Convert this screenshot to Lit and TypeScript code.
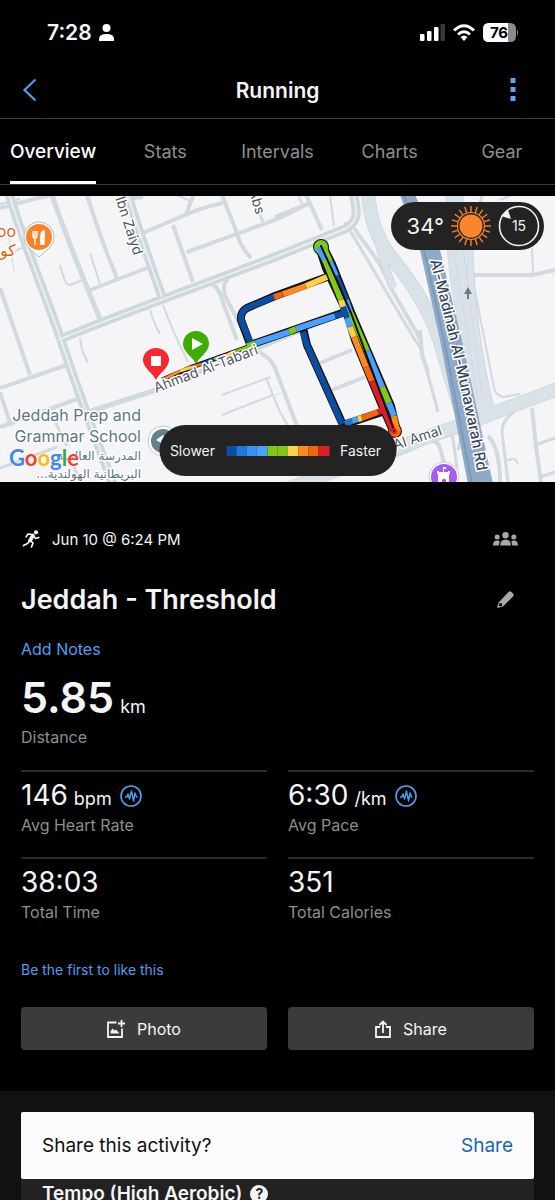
import { LitElement, html, css, svg } from "lit";
import { customElement, state } from "lit/decorators.js";
import { classMap } from "lit/directives/class-map.js";

const NAVY = "#0b4da2";
const BLUE = "#1f78d8";
const SKY = "#4aa0ff";
const GREEN = "#7fc91c";
const YELLOW = "#ffcf4a";
const ORANGE = "#ff8a22";
const RUST = "#f2660f";
const RED = "#dc1f24";

const PACE_SCALE = [NAVY, BLUE, "#3b92f2", SKY, GREEN, GREEN, YELLOW, ORANGE, RUST, RED];

type Road = [string, number];

const ROADS: Road[] = [
  ["M0 208 50 195", 4],
  ["M0 204 20 199", 2],
  ["M52 195 C64 232 84 280 102 324", 5],
  ["M87 195 C96 224 106 252 117 278", 4],
  ["M90 290 147 268", 4],
  ["M143 233 C170 222 196 208 223 203", 4],
  ["M128 199 143 197", 4],
  ["M173 225 193 282", 4],
  ["M187 252 280 218 310 203", 4],
  ["M222 195 237 233 Q240 246 251 258", 4],
  ["M193 195 186 216", 4],
  ["M177 195 190 201", 2],
  ["M252 195 263 222", 3],
  ["M60 265 62 272 Q66 286 70 285 L82 280", 2],
  ["M90 253 100 284", 2],
  ["M8 232 14 271", 1],
  ["M15 251 24 247", 2],
  ["M0 288 17 337 30 375", 4],
  ["M0 388 67 365", 4],
  ["M0 392 11 426", 4],
  ["M0 427 80 398", 4],
  ["M48 407 67 446", 3],
  ["M0 468 57 447", 3],
  ["M80 482 72 462", 3],
  ["M88 412 153 391", 5],
  ["M150 310 Q154 324 160 334", 2],
  ["M163 305 C172 330 180 346 188 362", 2],
  ["M80 338 82 350 88 363", 2],
  ["M210 284 Q219 286 222 300 L237 340", 4],
  ["M228 279 Q222 284 225 296 L252 348 Q272 358 275 368 L297 426", 4],
  ["M222 395 270 377", 2],
  ["M222 415 273 395", 2],
  ["M266 378 280 412 288 426", 2],
  ["M275 395 281 393", 1],
  ["M320 363 352 350", 4],
  ["M332 390 365 377", 4],
  ["M275 217 310 203", 4],
  ["M306 195 322 230", 4],
  ["M330 195 334 226", 2],
  ["M298 195 303 206", 2],
  ["M354 228 C370 252 382 262 392 290 L422 342", 4],
  ["M345 222 415 340 Q422 348 424 360 L438 412", 3],
  ["M420 330 422 355 428 372", 4],
  ["M473 275 533 275 555 270", 4],
  ["M532 248 533 274", 2],
  ["M482 195 470 250", 3],
  ["M500 200 512 195", 2],
  ["M472 276 494 388 Q496 396 504 397 L520 394", 2],
  ["M395 456 430 441 Q438 440 440 448 L446 470", 4],
  ["M452 432 457 468", 3],
  ["M458 450 Q462 430 470 424", 3],
  ["M488 436 Q500 448 500 482", 4],
  ["M514 412 Q502 420 502 432 L508 482", 3],
  ["M532 408 536 446 541 482", 4],
  ["M535 445 555 438", 3],
  ["M540 477 555 472", 3],
  ["M507 460 515 459 518 464", 2],
];

const DOUBLE_ROADS: string[] = [
  "M8 190 C22 240 44 290 60 337 Q78 392 113 484",
  "M128 195 C138 230 152 268 162 297",
  "M58 340 C120 314 200 286 280 255 L345 229 Q358 222 356 208 L353 190",
];

const WIDE_ROADS: Road[] = [
  ["M368 190 Q370 232 392 258 C418 290 436 322 444 356 L460 408", 13],
  ["M372 205 Q378 250 393 288", 7],
  ["M455 190 C452 250 462 300 470 340 L486 412", 17],
  ["M470 240 C470 300 478 350 490 408", 6],
  ["M270 496 C340 468 400 446 462 425 L560 388", 13],
];

const ROUTE_LINES: string[] = [
  "M250 345 345 312",
  "M250 344 241 320 Q240 312 247 308 L275 296 327 277",
  "M319 247 326 268 347 313 355 340 383 408 393 431",
  "M323 246 332 264 351 312 365 345 391 406 397 431",
  "M303 328 307 345 343 425 382 412",
];

const START_SEGMENTS: [string, string][] = [
  ["M162 380 180 371", ORANGE],
  ["M180 371 192 367", YELLOW],
  ["M192 367 202 364", RUST],
  ["M202 364 214 359", NAVY],
  ["M214 359 222 357", GREEN],
  ["M222 357 234 352", YELLOW],
  ["M234 352 248 347", GREEN],
];

const PACE_SEGMENTS: [string, string][] = [
  ["M247 346 256 343", GREEN],
  ["M256 343 289 332", SKY],
  ["M289 332 296 329", GREEN],
  ["M296 329 335 316", SKY],
  ["M335 316 347 312", NAVY],
  ["M250 342 241 320 Q240 312 247 308 L274 297", NAVY],
  ["M274 297 283 294", RUST],
  ["M283 294 306 286", ORANGE],
  ["M306 286 327 277", YELLOW],
  ["M323 246 330 262", GREEN],
  ["M330 262 336 276", SKY],
  ["M336 276 346 300", NAVY],
  ["M346 300 350 312", SKY],
  ["M350 312 367 351", GREEN],
  ["M367 351 382 387", SKY],
  ["M382 387 389 403", GREEN],
  ["M389 403 394 416", SKY],
  ["M394 416 397 431", ORANGE],
  ["M318 247 326 262", SKY],
  ["M325 260 341 300", GREEN],
  ["M341 300 343 307", YELLOW],
  ["M343 307 347 318", NAVY],
  ["M347 318 350 327", SKY],
  ["M350 327 354 337", YELLOW],
  ["M354 337 366 367", ORANGE],
  ["M366 367 372 381", RUST],
  ["M372 381 393 431", RED],
  ["M303 332 307 345 342 424", NAVY],
  ["M345 424 352 421", BLUE],
  ["M352 421 358 419", SKY],
  ["M358 419 362 418", YELLOW],
  ["M362 418 378 412", RUST],
  ["M378 412 383 410", RED],
];

const SUN_RAYS = Array.from({ length: 20 }, (_, i) => (i * Math.PI) / 10);

@customElement("activity-map")
export class ActivityMap extends LitElement {
  static styles = css`
    :host {
      display: block;
      position: relative;
      height: 286px;
      overflow: hidden;
      background: #f5f4f6;
    }
    .map {
      display: block;
      width: 100%;
      height: 100%;
    }
    .road {
      fill: none;
      stroke: #d1dae1;
    }
    .casing {
      fill: none;
      stroke: #cdd7de;
      stroke-width: 9;
    }
    .casing.slim {
      stroke-width: 5;
    }
    .median {
      fill: none;
      stroke: #e9eef1;
      stroke-width: 2;
    }
    .wide-edge {
      fill: none;
      stroke: #c3cfd8;
    }
    .wide {
      fill: none;
      stroke: #d9e2e8;
    }
    .route-edge {
      fill: none;
      stroke: #111;
      stroke-width: 8;
      stroke-linejoin: round;
    }
    .route-edge.slim {
      stroke-width: 5;
    }
    .pace {
      fill: none;
      stroke-width: 6;
      stroke-linejoin: round;
    }
    .pace.slim {
      stroke-width: 3;
    }
    text {
      font-family: Inter, "Noto Sans", sans-serif;
      paint-order: stroke;
      stroke: #fff;
      stroke-width: 3px;
      stroke-linejoin: round;
    }
    .street {
      font-size: 14px;
      fill: #4c5560;
    }
    .highway {
      font-size: 15px;
      font-weight: 500;
      fill: #39465a;
    }
    .place {
      font-size: 16px;
      fill: #5d7684;
    }
    .arabic {
      font-family: "DejaVu Sans", sans-serif;
      font-size: 12px;
      fill: #5d7684;
      direction: rtl;
    }
    .food {
      font-size: 16px;
      fill: #d9651b;
    }
    .logo {
      font-family: Lato, sans-serif;
      font-size: 22px;
      font-weight: 700;
      stroke-width: 1px;
    }
    .weather,
    .scale {
      position: absolute;
      display: flex;
      align-items: center;
      box-sizing: border-box;
      background: #232323;
      color: #f2f2f2;
      border-radius: 26px;
    }
    .weather {
      top: 6px;
      right: 11px;
      height: 48px;
      padding: 0 4px 0 16px;
      gap: 6px;
      font-size: 22px;
    }
    .wind text {
      font-size: 14px;
      fill: #f2f2f2;
      stroke: none;
    }
    .scale {
      bottom: 6px;
      left: 50%;
      transform: translateX(-50%);
      height: 51px;
      width: 237px;
      padding-right: 4px;
      justify-content: center;
      gap: 11px;
      font-size: 14px;
    }
    .swatches {
      display: flex;
      width: 103px;
      height: 10px;
    }
    .swatch {
      flex: 1;
    }
  `;

  render() {
    return html`
      <svg class="map" viewBox="0 196 555 286" preserveAspectRatio="xMidYMid slice" role="img" aria-label="Route map">
        ${ROADS.map(([d, w]) => svg`<path class="road" d=${d} stroke-width=${w} />`)}
        ${DOUBLE_ROADS.map((d) => svg`<path class="casing" d=${d} />`)}
        ${DOUBLE_ROADS.map((d) => svg`<path class="median" d=${d} />`)}
        ${WIDE_ROADS.map(([d, w]) => svg`<path class="wide-edge" d=${d} stroke-width=${w + 1} />`)}
        ${WIDE_ROADS.map(([d, w]) => svg`<path class="wide" d=${d} stroke-width=${w} />`)}
        <path class="road" d="M452 240 478 400M462 240 482 395M440 360 466 412" stroke-width="1" />
        <path d="M400 195h15L440 250 463 345 493 484H468L440 340 420 250Z" fill="#8fa9c6" />
        <path d="M404 195 424 250 444 340 472 484" fill="none" stroke="#7b99ba" stroke-width="2" />
        <path d="M468 287l4 7h-3v5h-2v-5h-3z" fill="#6f7b84" />

        <path class="casing slim" d="M153 391 345 312" />

        <path class="route-edge slim" d="M162 380 192 367 248 347" />
        ${START_SEGMENTS.map(([d, c]) => svg`<path class="pace slim" d=${d} stroke=${c} />`)}
        ${ROUTE_LINES.map((d) => svg`<path class="route-edge" d=${d} />`)}
        <circle cx="321" cy="247" r="8" fill="#111" />
        <circle cx="321" cy="247" r="7" fill=${GREEN} />
        <circle cx="395" cy="431" r="7" fill="#111" />
        <circle cx="395" cy="431" r="6" fill=${RUST} />
        ${PACE_SEGMENTS.map(([d, c]) => svg`<path class="pace" d=${d} stroke=${c} />`)}
        <path d="M321 246 333 272 351 313 394 430" fill="none" stroke="#111" stroke-width="2" stroke-linecap="round" />
        <circle cx="394" cy="431" r="2" fill="#111" stroke=${RED} stroke-width="2" />

        <g transform="translate(156 393) rotate(-21)"><text class="street">Ahmad Al-Tabari</text></g>
        <g transform="translate(134 256) rotate(72)"><text class="street" text-anchor="end">l Ibn Zaiyd</text></g>
        <g transform="translate(256 215) rotate(74)"><text class="street" text-anchor="end">Abs</text></g>
        <g transform="translate(395 450) rotate(-18)"><text class="street">Al Amal</text></g>
        <path id="highway-line" d="M430 261 C445 318 463 392 480 486" fill="none" />
        <text class="highway">
          <textPath href="#highway-line">Al-Madinah Al-Munawarah Rd</textPath>
        </text>

        <text class="food" x="16" y="237" text-anchor="end">koo</text>
        <text class="food" x="16" y="256" text-anchor="end">كوكو</text>
        <path d="M39 257 30 249A15 15 0 1 1 48 249Z" fill="#fff" stroke="#b9b9b9" />
        <circle cx="39" cy="237" r="13" fill="#f9822b" />
        <path d="M33 231v5q0 2 2 2v7M37 231v5q0 2-2 2M35 231v7" stroke="#fff" stroke-width="1.4" fill="none" />
        <path d="M41 245v-9q0-4 3-5v14" stroke="#fff" stroke-width="1.6" fill="#fff" />

        <circle cx="163" cy="441" r="15" fill="#fff" stroke="#c4c9cc" />
        <circle cx="163" cy="441" r="12" fill="#66808c" />
        <path d="M156 440 163 435 170 439 163 444Z" fill="#fff" />
        <circle cx="444" cy="477" r="15" fill="#fff" stroke="#cfc6d8" />
        <circle cx="444" cy="477" r="13" fill="#a35cf5" />
        <path d="M438 484v-10h-1v-3h2v1h4v-5h3v2h-2v3h4v-1h2v3h-1v10h-3v-4q-2-3-4 0v4z" fill="#fff" />

        <path d="M156 380C153 373 143 368 143 360A13 12 0 0 1 169 360C169 368 159 373 156 380Z" fill="#f8262f" />
        <rect x="151" y="356" width="10" height="10" fill="#fff" />
        <path d="M196 364C193 357 183 352 183 344A13 13 0 0 1 209 344C209 352 199 357 196 364Z" fill="#3fab05" />
        <path d="M192 338v12l11-6z" fill="#fff" />

        <text class="place" x="141" y="421" text-anchor="end">Jeddah Prep and</text>
        <text class="place" x="141" y="442" text-anchor="end">Grammar School</text>
        <text class="arabic" x="141" y="460">المدرسة العالمية</text>
        <text class="arabic" x="141" y="478">البريطانية الهولندية...</text>
        <text class="logo" x="9" y="466"><tspan fill="#4285f4">G</tspan><tspan fill="#ea4335">o</tspan><tspan fill="#fbbc05">o</tspan><tspan fill="#4285f4">g</tspan><tspan fill="#34a853">l</tspan><tspan fill="#ea4335">e</tspan></text>
      </svg>

      <div class="weather">
        <span>34°</span>
        <svg width="42" height="42" viewBox="-21 -21 42 42" role="img" aria-label="Sunny">
          ${SUN_RAYS.map(
            (a) => svg`<line x1=${14 * Math.cos(a)} y1=${14 * Math.sin(a)} x2=${20 * Math.cos(a)} y2=${20 * Math.sin(a)} stroke="#f9862c" stroke-width="1.4" />`
          )}
          <circle r="13.5" fill="none" stroke="#f9862c" stroke-width="1.2" />
          <circle r="11.5" fill="#f9862c" />
        </svg>
        <svg class="wind" width="42" height="42" viewBox="-21 -21 42 42" role="img" aria-label="Wind 15">
          <circle r="19.5" fill="none" stroke="#f2f2f2" stroke-width="1.6" />
          <path d="M-18-10-11-16-8-7Z" fill="#f2f2f2" />
          <text y="5" text-anchor="middle">15</text>
        </svg>
      </div>

      <div class="scale">
        <span>Slower</span>
        <div class="swatches">
          ${PACE_SCALE.map((c) => html`<span class="swatch" style="background:${c}"></span>`)}
        </div>
        <span>Faster</span>
      </div>
    `;
  }
}

@customElement("stat-cell")
export class StatCell extends LitElement {
  static properties = {
    value: { type: String },
    unit: { type: String },
    label: { type: String },
    chart: { type: Boolean },
  };
  declare value: string;
  declare unit: string;
  declare label: string;
  declare chart: boolean;

  static styles = css`
    :host {
      display: block;
      border-top: 2px solid #2c2c2c;
      padding: 7px 0 20px;
    }
    .line {
      display: flex;
      align-items: baseline;
      gap: 6px;
      height: 34px;
      line-height: 32px;
      font-size: 28px;
      color: #f5f5f5;
    }
    .unit {
      font-size: 18px;
      line-height: 24px;
    }
    .label {
      font-size: 16px;
      line-height: 24px;
      color: #8e8e8e;
    }
    .chart {
      align-self: center;
      display: flex;
      border: 0;
      padding: 0;
      margin-left: 2px;
      background: none;
    }
  `;

  render() {
    return html`
      <div class="line">
        <span>${this.value}</span>
        ${this.unit ? html`<span class="unit">${this.unit}</span>` : ""}
        ${this.chart
          ? html`<button class="chart" aria-label="${this.label} chart">
              <svg width="22" height="22" viewBox="0 0 22 22" fill="none" stroke="#4f9ff0">
                <circle cx="11" cy="11" r="10" stroke-width="1.6" />
                <path d="M5 12h2l1-3 1.5 5L11.5 6l2 10 1.5-8 1.5 4h1" stroke-width="1.4" stroke-linejoin="round" />
              </svg>
            </button>`
          : ""}
      </div>
      <div class="label">${this.label}</div>
    `;
  }
}

const TABS = ["Overview", "Stats", "Intervals", "Charts", "Gear"];

@customElement("app-root")
export class AppRoot extends LitElement {
  @state() private tab = "Overview";

  static styles = css`
    :host {
      display: flex;
      flex-direction: column;
      position: relative;
      height: 100vh;
      overflow: hidden;
      background: #000;
      color: #f5f5f5;
      font-family: Inter, "Noto Sans", sans-serif;
    }
    button {
      font: inherit;
      color: inherit;
      background: none;
      border: 0;
      padding: 0;
      cursor: pointer;
    }
    a {
      color: #4f9ff0;
      text-decoration: none;
    }
    svg {
      display: block;
    }
    .status {
      display: flex;
      align-items: center;
      justify-content: space-between;
      height: 62px;
      box-sizing: border-box;
      padding: 2px 36px 0 47px;
      flex: none;
    }
    .clock {
      display: flex;
      align-items: center;
      gap: 7px;
      font-size: 21px;
      font-weight: 600;
    }
    .signals {
      display: flex;
      align-items: center;
      gap: 8px;
    }
    .battery text {
      font-family: Inter, sans-serif;
      font-size: 15px;
      font-weight: 700;
    }
    .bar {
      display: grid;
      grid-template-columns: 60px 1fr 60px;
      align-items: center;
      height: 56px;
      flex: none;
      border-bottom: 1px solid #3a3a3a;
    }
    .bar h1 {
      margin: 0;
      text-align: center;
      font-size: 21px;
      font-weight: 600;
    }
    .back {
      padding-left: 22px;
      justify-self: start;
    }
    .more {
      padding-right: 39px;
      justify-self: end;
    }
    .tabs {
      display: grid;
      grid-template-columns: repeat(5, 1fr);
      margin: 0 -3px;
      flex: none;
      border-bottom: 1px solid #3a3a3a;
    }
    .tab {
      display: flex;
      justify-content: center;
      font-size: 18px;
      color: #8e8e8e;
    }
    .tab span {
      line-height: 58px;
      padding-top: 4px;
      border-bottom: 3px solid transparent;
    }
    .tab.on {
      color: #fff;
      font-size: 19px;
      font-weight: 500;
    }
    .tab.on span {
      border-color: #fff;
    }
    .scroll {
      flex: 1;
      min-height: 0;
      overflow-y: auto;
      scrollbar-width: none;
      padding-top: 11px;
    }
    .details {
      padding: 24px 21px 41px;
    }
    .row {
      display: flex;
      align-items: center;
      justify-content: space-between;
    }
    .when {
      height: 66px;
      padding-right: 16px;
      font-size: 15px;
    }
    .when time {
      display: flex;
      align-items: center;
      gap: 11px;
    }
    .title {
      height: 54px;
      padding-right: 20px;
    }
    .title h2 {
      margin: 0;
      font-size: 27px;
      font-weight: 600;
    }
    .notes {
      display: block;
      margin-top: 11px;
      font-size: 16px;
      line-height: 24px;
    }
    .distance {
      display: flex;
      align-items: baseline;
      gap: 6px;
      margin-top: 10px;
      font-size: 43px;
      line-height: 52px;
      font-weight: 600;
    }
    .distance .unit {
      font-size: 18px;
      line-height: 24px;
      font-weight: 400;
    }
    .label {
      font-size: 16px;
      line-height: 24px;
      margin: 2px 0 21px;
      color: #8e8e8e;
    }
    .stats,
    .actions {
      display: grid;
      grid-template-columns: 1fr 1fr;
      column-gap: 21px;
    }
    .likes {
      display: block;
      margin-top: 16px;
      font-size: 14px;
      line-height: 20px;
    }
    .actions {
      margin-top: 27px;
    }
    .action {
      display: flex;
      align-items: center;
      justify-content: center;
      gap: 12px;
      height: 43px;
      border-radius: 4px;
      background: #3b3b3b;
      font-size: 16px;
    }
    .effects {
      padding: 21px;
      background: #111;
    }
    .effect {
      display: flex;
      align-items: center;
      gap: 8px;
      padding: 70px 21px 21px;
      background: #222;
      font-size: 19px;
      font-weight: 600;
      line-height: 24px;
    }
    .effect h3 {
      margin: 0;
      font: inherit;
    }
    .help {
      width: 18px;
      height: 18px;
      border-radius: 50%;
      background: #f5f5f5;
      color: #222;
      font-size: 14px;
      font-weight: 700;
      line-height: 18px;
    }
    .toast {
      position: absolute;
      left: 21px;
      right: 21px;
      bottom: 21px;
      display: flex;
      align-items: center;
      justify-content: space-between;
      padding: 0 21px;
      height: 67px;
      border-radius: 2px;
      background: #fcfcfc;
      color: #111;
      font-size: 19px;
    }
    .toast button {
      color: #1467c0;
    }
  `;

  render() {
    return html`
      <div class="status">
        <div class="clock">
          <span>7:28</span>
          <svg width="15" height="17" viewBox="0 0 15 17" fill="#fff">
            <circle cx="7.5" cy="4" r="4" />
            <path d="M0 17v-2q0-5 7.5-5T15 15v2z" />
          </svg>
        </div>
        <div class="signals">
          <svg width="25" height="17" viewBox="0 0 25 17" fill="#fff">
            <rect y="10" width="4.5" height="7" rx="1" />
            <rect x="7" y="7" width="4.5" height="10" rx="1" />
            <rect x="14" y="3" width="4.5" height="14" rx="1" />
            <rect x="20.5" width="4.5" height="17" rx="1" fill="#3a3a3a" />
          </svg>
          <svg width="22" height="17" viewBox="0 0 22 17" fill="none" stroke="#fff" stroke-width="3">
            <path d="M1 6.5Q11-3 21 6.5" />
            <path d="M5 10.5Q11 5 17 10.5" />
            <path d="M11 17 7.5 13Q11 10 14.5 13Z" fill="#fff" stroke="none" />
          </svg>
          <svg class="battery" width="36" height="19" viewBox="0 0 36 19">
            <path d="M6 0H27Q33 0 33 6v7q0 6-6 6H6Q0 19 0 13V6Q0 0 6 0" fill="#8a8a8a" />
            <path d="M6 0H25V19H6Q0 19 0 13V6Q0 0 6 0" fill="#fff" />
            <path d="M34 6q2 3.5 0 7z" fill="#8a8a8a" />
            <text x="16" y="15" text-anchor="middle">76</text>
          </svg>
        </div>
      </div>

      <header class="bar">
        <button class="back" aria-label="Back">
          <svg width="15" height="24" viewBox="0 0 15 24" fill="none" stroke="#4f9ff0" stroke-width="2.2">
            <path d="M13.5 1.5 2.5 12 13.5 22.5" />
          </svg>
        </button>
        <h1>Running</h1>
        <button class="more" aria-label="More">
          <svg width="6" height="24" viewBox="0 0 6 24" fill="#5ba6f5">
            <rect width="5" height="5" x=".5" /><rect width="5" height="5" x=".5" y="9" /><rect width="5" height="5" x=".5" y="18" />
          </svg>
        </button>
      </header>

      <nav class="tabs">
        ${TABS.map(
          (t) => html`<button class=${classMap({ tab: true, on: t === this.tab })} @click=${() => (this.tab = t)}>
            <span>${t}</span>
          </button>`
        )}
      </nav>

      <main class="scroll">
        <activity-map></activity-map>

        <section class="details">
          <div class="row when">
            <time>
              <svg width="20" height="18" viewBox="0 0 20 18" fill="none" stroke="#f5f5f5" stroke-linecap="round" stroke-linejoin="round">
                <circle cx="15" cy="2.3" r="2.1" fill="#f5f5f5" stroke="none" />
                <path d="M12 5.5 9 10.5" stroke-width="3.6" />
                <path d="M11 4.5 7 4 5 7M13 6.5 14.5 8.5 18 7.5" stroke-width="1.5" />
                <path d="M9.5 10.5 12 13 10.5 17M8.5 11 6.5 13.5 2.5 15.5" stroke-width="1.7" />
              </svg>
              Jun 10 @ 6:24 PM
            </time>
            <button aria-label="Privacy">
              <svg width="25" height="14" viewBox="0 0 25 14" fill="#a9a9a9">
                <circle cx="12.5" cy="3.3" r="3.2" /><circle cx="4.2" cy="5" r="2.5" /><circle cx="20.8" cy="5" r="2.5" />
                <path d="M7 13.5Q7.5 7.5 12.5 7.5T18 13.5Z" />
                <path d="M0 13.5Q0 8.5 4.2 8.5 6 8.5 6.8 9.5 6 11 5.8 13.5ZM25 13.5Q25 8.5 20.8 8.5 19 8.5 18.2 9.5 19 11 19.2 13.5Z" />
              </svg>
            </button>
          </div>

          <div class="row title">
            <h2>Jeddah - Threshold</h2>
            <button aria-label="Edit title">
              <svg width="17" height="17" viewBox="0 0 17 17" fill="#a9a9a9">
                <path fill-rule="evenodd" d="M0 17 1.5 11.5 11.5 1Q13-.5 14.5 1L16 2.5Q17.5 4 16 5.5L6 15.5ZM2.5 12 1.8 14.5 3 15.5 5.2 14.8 4.8 12.6Z" />
              </svg>
            </button>
          </div>

          <a class="notes" href="#notes">Add Notes</a>
          <div class="distance"><span>5.85</span><span class="unit">km</span></div>
          <div class="label">Distance</div>

          <div class="stats">
            <stat-cell value="146" unit="bpm" label="Avg Heart Rate" chart></stat-cell>
            <stat-cell value="6:30" unit="/km" label="Avg Pace" chart></stat-cell>
            <stat-cell value="38:03" label="Total Time"></stat-cell>
            <stat-cell value="351" label="Total Calories"></stat-cell>
          </div>

          <a class="likes" href="#likes">Be the first to like this</a>

          <div class="actions">
            <button class="action">
              <svg width="18" height="18" viewBox="0 0 18 18" fill="none" stroke="#f5f5f5" stroke-width="1.8">
                <path d="M9.5 2.5H1V17H15V8.5M14.5 0v7M11 3.5h7" />
                <path d="M3.5 13.5v-2l2-3 2 2 1.5-1 3.5 4z" fill="#f5f5f5" stroke="none" />
              </svg>
              Photo
            </button>
            <button class="action">
              <svg width="16" height="18" viewBox="0 0 16 18" fill="none" stroke="#f5f5f5" stroke-width="1.8">
                <path d="M5 7H1V17H15V7H11M8 13V1.5M4.5 5 8 1.5 11.5 5" />
              </svg>
              Share
            </button>
          </div>
        </section>

        <section class="effects">
          <div class="effect">
            <h3>Tempo (High Aerobic)</h3>
            <button class="help" aria-label="Help">?</button>
          </div>
        </section>
      </main>

      <div class="toast" role="status">
        <span>Share this activity?</span>
        <button>Share</button>
      </div>
    `;
  }
}
